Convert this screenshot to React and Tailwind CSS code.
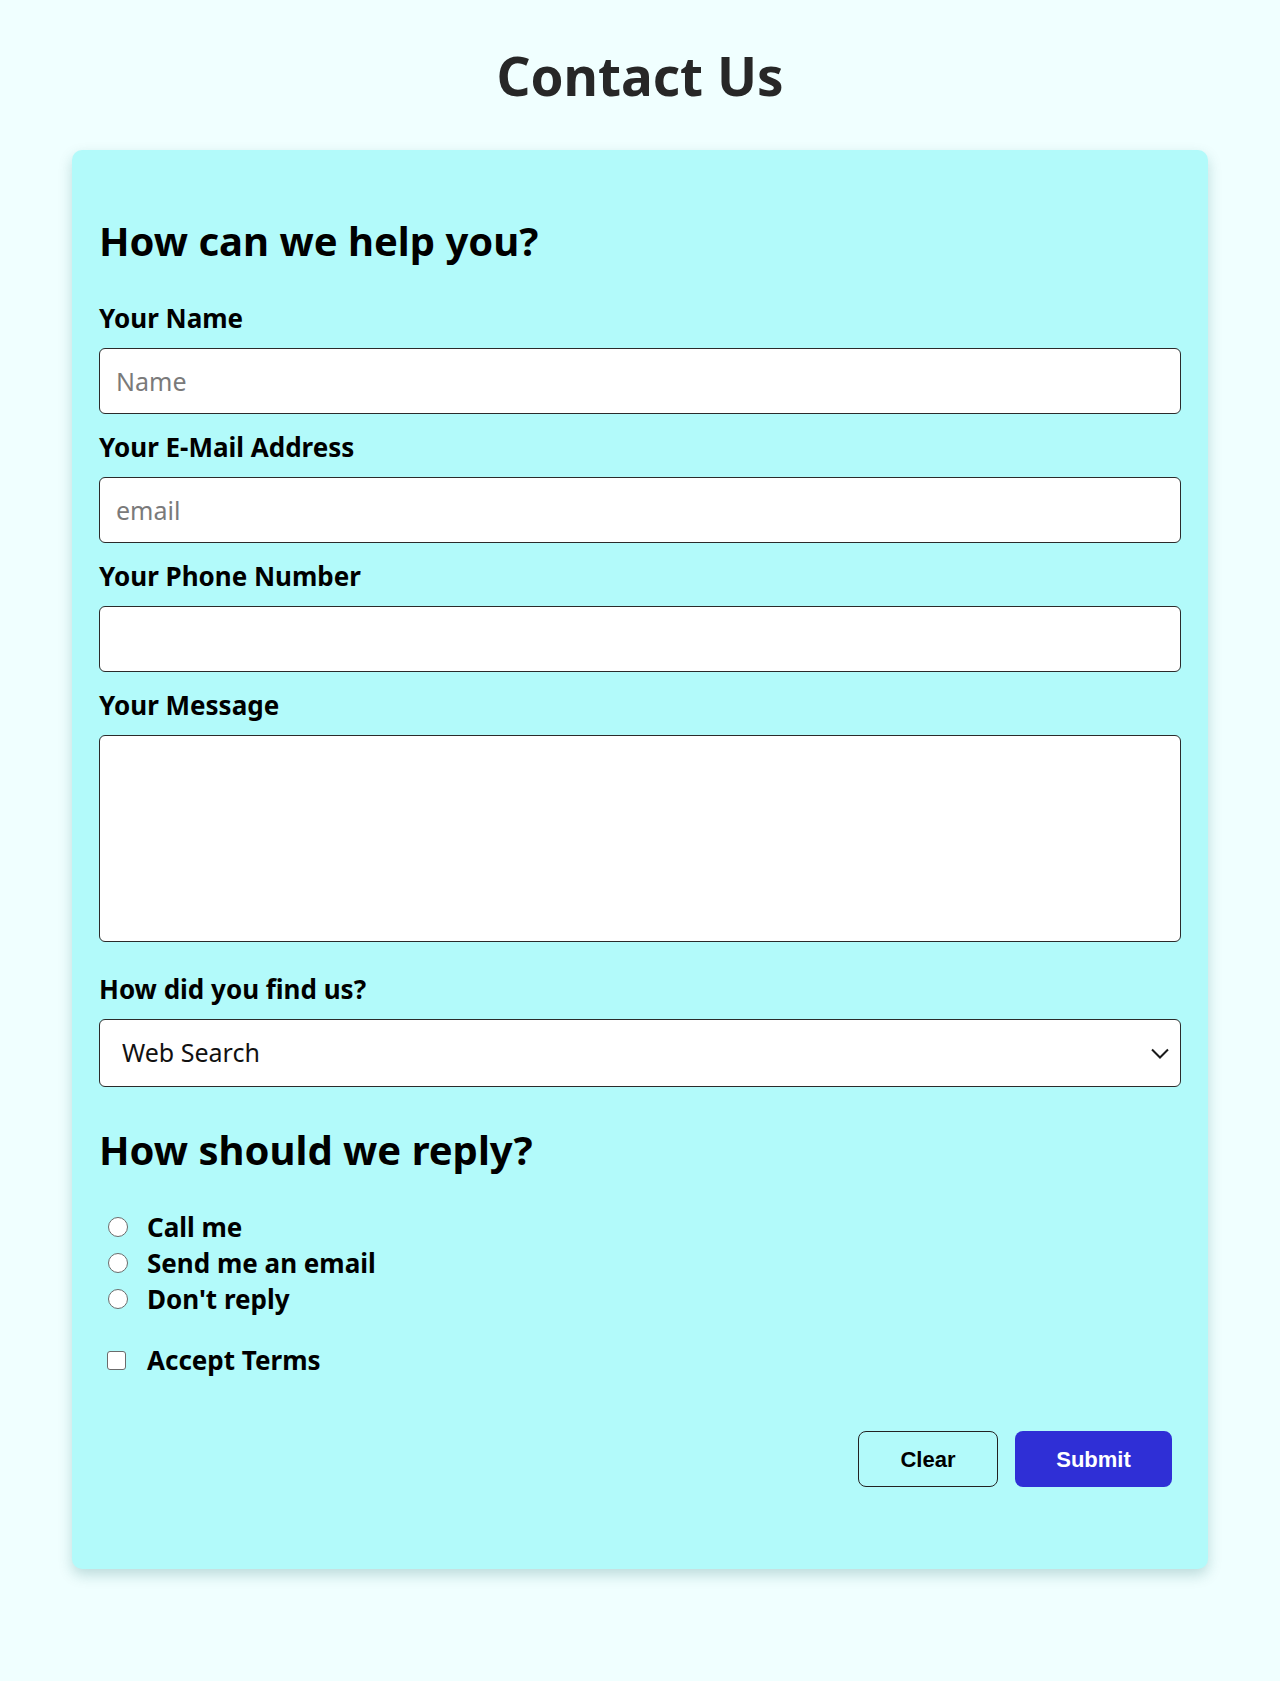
import React, { useState } from "react";

const font = { fontFamily: '"Noto Sans", "Noto Sans CJK KR", sans-serif' };

function Field({ label, children, first }) {
  return (
    <div className={first ? "mt-[39px]" : "mt-[17px]"}>
      <label className="block h-8 text-[26px] leading-8 font-bold text-black">{label}</label>
      <div className="mt-[14px]">{children}</div>
    </div>
  );
}

const inputCls =
  "block w-full h-[66px] rounded-[6px] border border-[#2b2b2b] bg-white px-4 text-[25px] text-[#111] placeholder:text-[#7a7a7a] outline-none";

export default function App() {
  const [reply, setReply] = useState("");
  const [terms, setTerms] = useState(false);

  return (
    <div className="min-h-[1681px] bg-[#f0ffff] pt-[47px]" style={font}>
      <h1 className="h-[58px] text-center text-[53px] leading-[58px] font-bold text-[#272727]">Contact Us</h1>

      <form className="mx-auto mt-[45px] w-[1136px] rounded-[10px] bg-[#b2fafa] px-[27px] pt-[69px] pb-[82px] shadow-[0_6px_14px_rgba(0,90,90,0.22)]">
        <h2 className="h-11 text-[40px] leading-[44px] font-bold text-black">How can we help you?</h2>

        <Field label="Your Name" first>
          <input className={inputCls} placeholder="Name" />
        </Field>
        <Field label="Your E-Mail Address">
          <input className={inputCls} placeholder="email" />
        </Field>
        <Field label="Your Phone Number">
          <input className={inputCls} />
        </Field>
        <Field label="Your Message">
          <textarea className="block h-[207px] w-full resize-none rounded-[6px] border border-[#2b2b2b] bg-white px-4 py-3 text-[25px] outline-none" />
        </Field>

        <div className="mt-[31px]">
          <label className="block h-8 text-[26px] leading-8 font-bold text-black">How did you find us?</label>
          <div className="relative mt-[14px]">
            <select
              defaultValue="Web Search"
              className="block h-[68px] w-full appearance-none rounded-[6px] border border-[#2b2b2b] bg-white pl-[22px] text-[25px] text-[#111] outline-none"
            >
              <option>Web Search</option>
              <option>Friend</option>
              <option>Advertisement</option>
            </select>
            <svg
              className="pointer-events-none absolute right-[12px] top-[29px]"
              width="18"
              height="11"
              viewBox="0 0 18 11"
              fill="none"
            >
              <path d="M1 1.5 L9 9.5 L17 1.5" stroke="#1a1a1a" strokeWidth="2" />
            </svg>
          </div>
        </div>

        <h2 className="mt-[41px] h-11 text-[40px] leading-[44px] font-bold text-black">How should we reply?</h2>

        <div className="mt-[37px]">
          {["Call me", "Send me an email", "Don't reply"].map((opt) => (
            <label key={opt} className="flex h-9 items-center">
              <input
                type="radio"
                name="reply"
                checked={reply === opt}
                onChange={() => setReply(opt)}
                className="ml-[9px] h-[20px] w-[20px] appearance-none rounded-full border border-[#6b6b6b] bg-white checked:border-[6px] checked:border-[#2f2fd6]"
              />
              <span className="ml-[19px] text-[26px] font-bold text-black">{opt}</span>
            </label>
          ))}
        </div>

        <label className="mt-[25px] flex h-9 items-center">
          <input
            type="checkbox"
            checked={terms}
            onChange={() => setTerms(!terms)}
            className="ml-[8px] h-[19px] w-[19px] appearance-none rounded-[3px] border border-[#6b6b6b] bg-white checked:bg-[#2f2fd6]"
          />
          <span className="ml-[21px] text-[26px] font-bold text-black">Accept Terms</span>
        </label>

        <div className="mt-[53px] flex justify-end gap-[17px] pr-[9px]" style={{ fontFamily: '"Liberation Sans", Arial, sans-serif' }}>
          <button
            type="reset"
            className="h-[56px] w-[140px] rounded-[8px] border border-[#222] text-[22px] font-bold text-black"
          >
            Clear
          </button>
          <button
            type="submit"
            className="h-[56px] w-[157px] rounded-[8px] bg-[#2f2fd6] text-[22px] font-bold text-white"
          >
            Submit
          </button>
        </div>
      </form>
    </div>
  );
}
